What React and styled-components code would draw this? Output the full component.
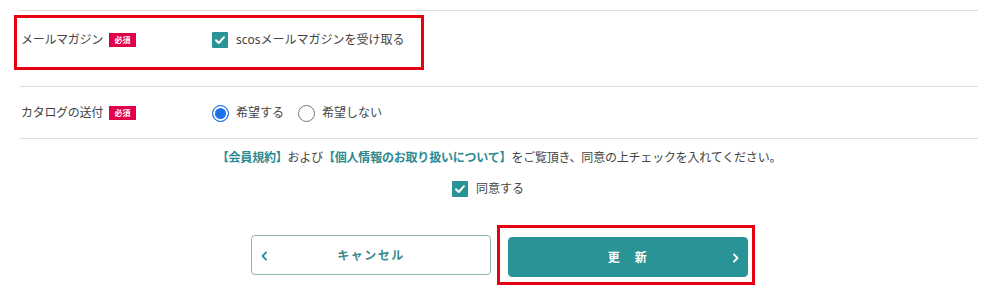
import React from "react";
import styled, { createGlobalStyle } from "styled-components";

const TEAL = "#2a9396";
const RED = "#e60012";

const GlobalStyle = createGlobalStyle`
  body {
    margin: 0;
    background: #fff;
    color: #444;
    font-family: "Noto Sans", "Noto Sans CJK JP", sans-serif;
  }
`;

function Check() {
  return (
    <svg width="12" height="12" viewBox="0 0 12 12">
      <polyline
        points="2,6.2 4.8,9 10,3.2"
        fill="none"
        stroke="#fff"
        strokeWidth="2"
        strokeLinecap="round"
        strokeLinejoin="round"
      />
    </svg>
  );
}

function Chevron({ dir, color }) {
  const pts = dir === "left" ? "6,1.5 2.5,5 6,8.5" : "3,1.5 6.5,5 3,8.5";
  return (
    <svg width="9" height="10" viewBox="0 0 9 10">
      <polyline
        points={pts}
        fill="none"
        stroke={color}
        strokeWidth="1.8"
        strokeLinecap="round"
        strokeLinejoin="round"
      />
    </svg>
  );
}

function App() {
  return (
    <>
      <GlobalStyle />
      <Page>
        <Row $pad="21px 0 38px">
          <Label>
            メールマガジン<Badge>必須</Badge>
          </Label>
          <Field>
            <CheckOption>
              <Box>
                <Check />
              </Box>
              scosメールマガジンを受け取る
            </CheckOption>
          </Field>
          <Mark $top="4px" $left="-6px" $width="410px" $height="55px" />
        </Row>
        <Row $pad="17px 0 16px" $last>
          <Label>
            カタログの送付<Badge>必須</Badge>
          </Label>
          <Field>
            <RadioOption>
              <Radio $checked />
              希望する
            </RadioOption>
            <RadioOption>
              <Radio />
              希望しない
            </RadioOption>
          </Field>
        </Row>
        <Agreement>
          <Notice>
            <Link>【会員規約】</Link>および<Link>【個人情報のお取り扱いについて】</Link>
            をご覧頂き、同意の上チェックを入れてください。
          </Notice>
          <CheckOption $shift="22px">
            <Box>
              <Check />
            </Box>
            同意する
          </CheckOption>
        </Agreement>
        <Buttons>
          <Button>
            <Chevron dir="left" color={TEAL} />
            キャンセル
          </Button>
          <Highlighted>
            <Button $primary>
              更　新
              <Chevron dir="right" color="#fff" />
            </Button>
          </Highlighted>
        </Buttons>
      </Page>
    </>
  );
}

const Page = styled.div`
  padding: 10px 22px 0 20px;
`;

const Row = styled.div`
  position: relative;
  display: grid;
  grid-template-columns: 192px 1fr;
  align-items: center;
  padding: ${(p) => p.$pad};
  border-top: 1px solid #dcdcdc;
  border-bottom: ${(p) => (p.$last ? "1px solid #dcdcdc" : "none")};
`;

const Label = styled.div`
  display: flex;
  align-items: center;
  gap: 6px;
  padding-left: 1px;
  font-size: 12px;
  line-height: 16px;
  letter-spacing: -0.3px;
  color: #444;
`;

const Badge = styled.span`
  display: inline-flex;
  align-items: center;
  justify-content: center;
  width: 27px;
  height: 14px;
  background: #e2004b;
  color: #fff;
  font-size: 8px;
  font-weight: 700;
  letter-spacing: 0;
`;

const Field = styled.div`
  display: flex;
  align-items: center;
  gap: 14px;
`;

const CheckOption = styled.label`
  display: inline-flex;
  align-items: center;
  gap: 8px;
  margin-right: ${(p) => p.$shift || "0"};
  font-size: 12px;
  line-height: 16px;
  color: #444;
`;

const Box = styled.span`
  display: inline-flex;
  align-items: center;
  justify-content: center;
  width: 16px;
  height: 16px;
  border-radius: 1px;
  background: ${TEAL};
`;

const RadioOption = styled.label`
  display: inline-flex;
  align-items: center;
  gap: 7px;
  font-size: 12px;
  line-height: 18px;
  color: #444;
`;

const Radio = styled.span`
  box-sizing: border-box;
  width: 17px;
  height: 17px;
  border-radius: 50%;
  border: ${(p) => (p.$checked ? "1.5px solid #1a6fdf" : "1px solid #767676")};
  background: ${(p) => (p.$checked ? "#1a73e8" : "#fff")};
  box-shadow: ${(p) => (p.$checked ? "inset 0 0 0 2px #fff" : "none")};
`;

const Mark = styled.div`
  position: absolute;
  top: ${(p) => p.$top};
  left: ${(p) => p.$left};
  width: ${(p) => p.$width};
  height: ${(p) => p.$height};
  border: 3px solid ${RED};
  box-sizing: border-box;
  pointer-events: none;
`;

const Agreement = styled.div`
  display: flex;
  flex-direction: column;
  align-items: center;
  gap: 14px;
  padding-top: 10px;
`;

const Notice = styled.p`
  margin: 0;
  font-size: 12px;
  line-height: 18px;
  letter-spacing: -0.2px;
  color: #444;
`;

const Link = styled.span`
  color: #2a8a90;
  font-weight: 700;
`;

const Buttons = styled.div`
  display: flex;
  justify-content: center;
  align-items: center;
  gap: 6px;
  margin-top: 28px;
  padding-left: 8px;
`;

const Highlighted = styled.div`
  padding: 9px 4px 5px 8px;
  border: 3px solid ${RED};
`;

const Button = styled.button`
  position: relative;
  box-sizing: border-box;
  width: 240px;
  height: 40px;
  display: flex;
  align-items: center;
  justify-content: center;
  padding: 0;
  border: 1px solid ${(p) => (p.$primary ? TEAL : "#8fb5b6")};
  border-radius: 4px;
  background: ${(p) => (p.$primary ? TEAL : "#fff")};
  color: ${(p) => (p.$primary ? "#fff" : "#3b8a8d")};
  font-family: inherit;
  font-size: 12px;
  font-weight: 700;
  letter-spacing: 1.5px;

  svg {
    position: absolute;
    top: 15px;
    left: ${(p) => (p.$primary ? "auto" : "8px")};
    right: ${(p) => (p.$primary ? "7px" : "auto")};
  }
`;

export default App;
